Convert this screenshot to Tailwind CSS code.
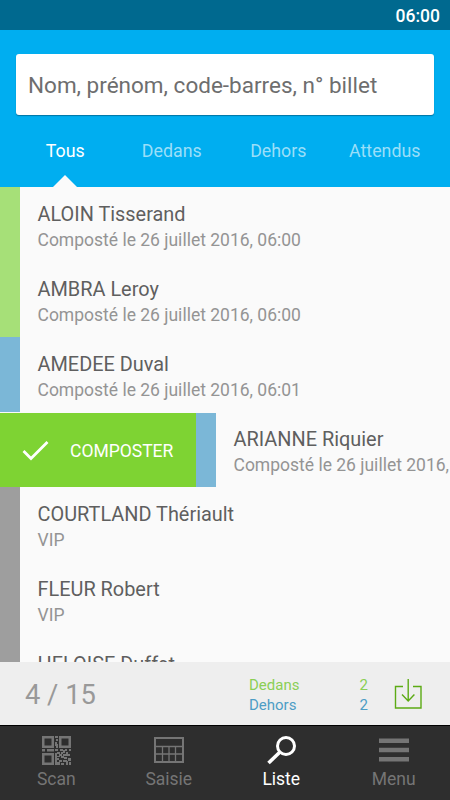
<!DOCTYPE html>
<html lang="fr">

<head>
  <meta charset="UTF-8" />
  <meta name="viewport" content="width=device-width, initial-scale=1.0" />
  <title>Liste des participants</title>
  <script src="https://cdn.jsdelivr.net/npm/@tailwindcss/browser@4"></script>
</head>

<body class="bg-[#fafafa] font-['Roboto',sans-serif]">
  <div class="w-[450px] h-[800px] flex flex-col overflow-hidden">
    <!-- Status bar -->
    <div class="h-[30px] shrink-0 bg-[#00698f] flex items-center justify-end pr-[10px] pt-[3px] text-[17.5px] font-medium text-white">06:00</div>

    <!-- Search and tabs -->
    <header class="h-[157px] shrink-0 bg-[#00aef0] pt-6 flex flex-col">
      <input type="text" placeholder="Nom, prénom, code-barres, n° billet"
        class="mx-4 h-[61px] shrink-0 w-[418px] pl-3 pt-px rounded-[3px] bg-white text-[22.5px] placeholder:text-[#6e6e6e] shadow-[0_1px_1px_rgba(0,60,90,0.5)]" />
      <nav class="flex-1 px-3 grid grid-cols-4 text-center text-[17.8px] text-[#9adff9]">
        <div class="relative pt-[23px] text-white">Tous
          <svg class="absolute bottom-0 left-[41px] w-6 h-3" viewBox="0 0 24 12"><path d="M0 12L12 0l12 12z" fill="#fafafa" /></svg>
        </div>
        <div class="pt-[23px]">Dedans</div>
        <div class="pt-[23px]">Dehors</div>
        <div class="pt-[23px]">Attendus</div>
      </nav>
    </header>

    <!-- People -->
    <main class="h-[475px] shrink-0 overflow-hidden text-[17.5px] leading-6 text-[#949494] whitespace-nowrap">
      <div class="h-[75px] flex">
        <div class="w-5 shrink-0 bg-[#a6e078]"></div>
        <div class="pl-[17.5px] pt-[15px]">
          <div class="text-[19.9px] leading-[26px] text-[#5f5f5f]">ALOIN Tisserand</div>
          <div>Composté le 26 juillet 2016, 06:00</div>
        </div>
      </div>
      <div class="h-[75px] flex">
        <div class="w-5 shrink-0 bg-[#a6e078]"></div>
        <div class="pl-[17.5px] pt-[15px]">
          <div class="text-[19.9px] leading-[26px] text-[#5f5f5f]">AMBRA Leroy</div>
          <div>Composté le 26 juillet 2016, 06:00</div>
        </div>
      </div>
      <div class="h-[75px] flex">
        <div class="w-5 shrink-0 bg-[#7bb7d7]"></div>
        <div class="pl-[17.5px] pt-[15px]">
          <div class="text-[19.9px] leading-[26px] text-[#5f5f5f]">AMEDEE Duval</div>
          <div>Composté le 26 juillet 2016, 06:01</div>
        </div>
      </div>
      <!-- Swiped row -->
      <div class="h-[75px] flex">
        <div class="w-[196px] shrink-0 mt-px bg-[#7ed333] flex items-center text-white">
          <svg class="ml-[22px] w-7 h-6" viewBox="0 0 28 24" fill="none" stroke="currentColor" stroke-width="2.8"><path d="M1.5 13L9 20.5 25.5 4" /></svg>
          <span class="ml-5 pt-0.5">COMPOSTER</span>
        </div>
        <div class="w-5 shrink-0 mt-px bg-[#7bb7d7]"></div>
        <div class="pl-[17.5px] pt-[15px]">
          <div class="text-[19.9px] leading-[26px] text-[#5f5f5f]">ARIANNE Riquier</div>
          <div>Composté le 26 juillet 2016,</div>
        </div>
      </div>
      <div class="h-[75px] flex">
        <div class="w-5 shrink-0 bg-[#9e9e9e]"></div>
        <div class="pl-[17.5px] pt-[15px]">
          <div class="text-[19.9px] leading-[26px] text-[#5f5f5f]">COURTLAND Thériault</div>
          <div>VIP</div>
        </div>
      </div>
      <div class="h-[75px] flex">
        <div class="w-5 shrink-0 bg-[#9e9e9e]"></div>
        <div class="pl-[17.5px] pt-[15px]">
          <div class="text-[19.9px] leading-[26px] text-[#5f5f5f]">FLEUR Robert</div>
          <div>VIP</div>
        </div>
      </div>
      <div class="h-[75px] flex">
        <div class="w-5 shrink-0 bg-[#9e9e9e]"></div>
        <div class="pl-[17.5px] pt-[15px]">
          <div class="text-[19.9px] leading-[26px] text-[#5f5f5f]">HELOISE Duffet</div>
        </div>
      </div>
    </main>

    <!-- Counters -->
    <section class="h-[63px] shrink-0 bg-[#eeeeee] flex items-center">
      <div class="w-[249px] pl-[25px] pt-[3px] text-[27.3px] text-[#999999]">4 / 15</div>
      <div class="w-[119px] pt-[3px] text-[15px] leading-5">
        <div class="flex justify-between text-[#8bcf55]"><span>Dedans</span><span>2</span></div>
        <div class="flex justify-between text-[#4d9dc5]"><span>Dehors</span><span>2</span></div>
      </div>
      <svg class="ml-[26px] w-7 h-[30px]" viewBox="0 0 28 30" fill="none" stroke="#5cab14" stroke-width="1.4"><path d="M9 7.5H1.5V29H27V7.5H19M14.2 0v22M8 15.5l6.2 6.5 6.2-6.5" /></svg>
    </section>

    <!-- Bottom navigation -->
    <nav class="h-[75px] shrink-0 bg-[#2e2e2e] border-t border-black grid grid-cols-4 text-center text-[17.5px] leading-[22px] text-[#757575]">
      <div class="flex flex-col items-center pt-[9px]">
        <svg class="w-[30px] h-[31px]" viewBox="0 0 30 31" fill="currentColor">
          <path fill-rule="evenodd" d="M1 1h12v12H1zM3.5 3.5v7h7v-7zM18 1h12v12H18zM20.5 3.5v7h7v-7zM1 18h12v12H1zM3.5 20.5v7h7v-7z" />
          <path d="M14 1h3v2h-3zM15 4h2v2h-2zM14 7h2v4h-2zM15 9h2v4h-2zM1 14h3v2.500H1zM6 14h7v2.500H6zM14 14h3v2h-3zM19 14h3v2h-3zM24 14h2v2h-2zM28 14h2v2h-2zM14 18h2v12h-2zM16 17h3v2h-3zM20 17h2v2h-2zM22 15h2v3h-2zM25 17h2v2h-2zM18 19h3v2h-3zM22 19h7v2h-7zM16 21h3v1h-3zM20 21h3v2h-3zM16 23h2v2h-2zM23 22h3v2h-3zM27 23h3v3h-3zM18 25h3v2h-3zM22 25h4v2h-4zM16 27h3v3h-3zM20 28h3v2h-3zM25 26h2v4h-2zM28 27h2v3h-2z" />
        </svg>
        <span class="mt-0.5">Scan</span>
      </div>
      <div class="flex flex-col items-center pt-[9px]">
        <svg class="w-[30px] h-[31px]" viewBox="0 0 30 31" fill="none" stroke="currentColor">
          <path stroke-width="2" d="M1 3h28v24H1z" />
          <path stroke-width="1.3" d="M2 11.5h26M2 19h26M8.5 11.5V27M15 11.5V27M21.5 11.5V27" />
        </svg>
        <span class="mt-0.5">Saisie</span>
      </div>
      <div class="flex flex-col items-center pt-[9px] text-white">
        <svg class="w-[30px] h-[31px]" viewBox="0 0 30 31" fill="none" stroke="currentColor" stroke-width="3">
          <circle cx="20" cy="11" r="8.5" />
          <path d="M14 17L2.5 28" stroke-width="3.6" />
        </svg>
        <span class="mt-0.5">Liste</span>
      </div>
      <div class="flex flex-col items-center pt-[9px]">
        <svg class="w-[30px] h-[31px]" viewBox="0 0 30 31" fill="currentColor">
          <path d="M0 3.5h30V8H0zM0 12.8h30v4.4H0zM0 22h30v4.5H0z" />
        </svg>
        <span class="mt-0.5">Menu</span>
      </div>
    </nav>
  </div>
</body>

</html>
